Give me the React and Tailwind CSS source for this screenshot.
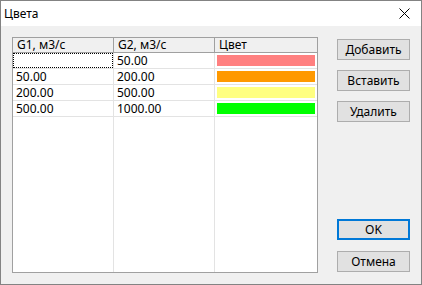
import React from "react";

const rows = [
  { g1: "", g2: "50.00", color: "#ff8080", focus: true },
  { g1: "50.00", g2: "200.00", color: "#ff9900" },
  { g1: "200.00", g2: "500.00", color: "#ffff80" },
  { g1: "500.00", g2: "1000.00", color: "#00ff00" },
];

function Btn({ children, def, className = "" }) {
  return (
    <div
      className={
        "w-[73px] h-[21px] flex items-center justify-center bg-[#e1e1e1] text-[12px] text-black leading-none " +
        (def ? "border-2 border-[#0078d7] " : "border border-[#adadad] ") +
        className
      }
    >
      {children}
    </div>
  );
}

export default function App() {
  return (
    <div
      className="w-[422px] h-[285px] border border-[#838383] bg-[#f0f0f0] flex flex-col"
      style={{ fontFamily: '"Noto Sans", "Open Sans", sans-serif' }}
    >
      <div className="h-[25px] bg-white flex items-center justify-between pl-[3px] pr-[11px] shrink-0">
        <span className="text-[12px] text-black">Цвета</span>
        <svg width="11" height="11" viewBox="0 0 11 11">
          <path d="M0.5 0.5 L10.5 10.5 M10.5 0.5 L0.5 10.5" stroke="#000" strokeWidth="1" fill="none" />
        </svg>
      </div>
      <div className="flex flex-1 pt-[11px] pl-[11px]">
        <div className="w-[306px] h-[236px] border border-[#a0a0a0] bg-white flex text-[12px] text-black leading-none">
          {[0, 1, 2].map((ci) => (
            <div
              key={ci}
              className={
                "flex flex-col h-full " +
                (ci < 2 ? "w-[101px] border-r border-[#e3e3e3]" : "flex-1")
              }
            >
              <div
                className={
                  "h-[15px] bg-[#f0f0f0] border-b border-[#a0a0a0] flex items-center pl-[4px] shrink-0 " +
                  (ci < 2 ? "-mr-px border-r border-[#a0a0a0]" : "")
                }
              >
                {ci === 0 ? "G1, м3/с" : ci === 1 ? "G2, м3/с" : "Цвет"}
              </div>
              {rows.map((r, ri) => (
                <div key={ri} className="h-[16px] border-b border-[#e3e3e3] shrink-0 flex">
                  {ci === 2 ? (
                    <div className="flex-1 p-[2px]">
                      <div className="w-full h-full" style={{ background: r.color }} />
                    </div>
                  ) : (
                    <div
                      className={
                        "flex-1 flex items-center pl-[3px] " +
                        (r.focus && ci === 0 ? "border border-dotted border-black" : "")
                      }
                    >
                      {ci === 0 ? r.g1 : r.g2}
                    </div>
                  )}
                </div>
              ))}
            </div>
          ))}
        </div>
        <div className="ml-[19px] pt-[2px] flex flex-col h-[236px]">
          <Btn>Добавить</Btn>
          <Btn className="mt-[10px]">Вставить</Btn>
          <Btn className="mt-[10px]">Удалить</Btn>
          <div className="flex-1" />
          <Btn def>OK</Btn>
          <Btn className="mt-[11px] mb-[1px]">Отмена</Btn>
        </div>
      </div>
    </div>
  );
}
